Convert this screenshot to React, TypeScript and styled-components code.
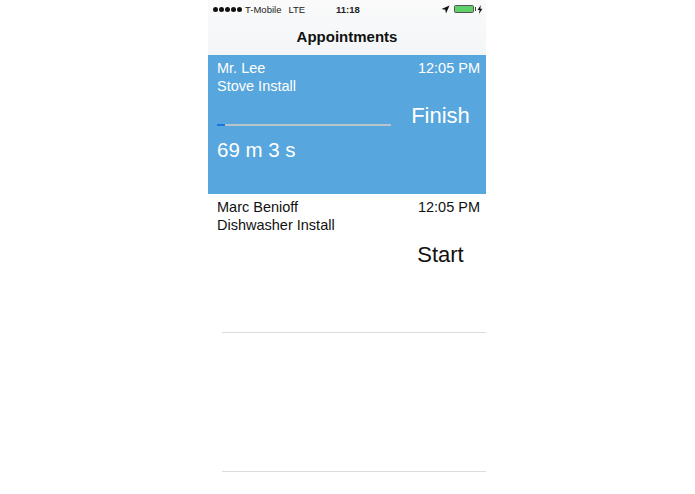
import React from "react";
import styled, { createGlobalStyle } from "styled-components";

const Global = createGlobalStyle`
  html, body { margin: 0; padding: 0; background: #fff; }
  body { font-family: "Liberation Sans", Arial, sans-serif; }
`;

const Page = styled.div`
  width: 695px;
  height: 494px;
  display: flex;
  justify-content: flex-start;
  overflow: hidden;
`;

const Phone = styled.div`
  width: 278px;
  margin-left: 208px;
  display: flex;
  flex-direction: column;
`;

const Header = styled.div`
  height: 55px;
  background: linear-gradient(#fafafa, #f3f6f8);
  display: flex;
  flex-direction: column;
`;

const StatusBar = styled.div`
  height: 18px;
  padding: 0 3px 0 5px;
  display: flex;
  align-items: center;
  position: relative;
  font-size: 9.5px;
  color: #222;
`;

const Dots = styled.div`
  display: flex;
  gap: 1px;
  margin-right: 3px;
`;

const Dot = styled.span`
  width: 5px;
  height: 5px;
  border-radius: 50%;
  background: #111;
`;

const Lte = styled.span`
  margin-left: 7px;
`;

const Clock = styled.span`
  position: absolute;
  left: 128px;
  font-weight: 700;
  font-size: 9.5px;
`;

const StatusRight = styled.div`
  margin-left: auto;
  display: flex;
  align-items: center;
  gap: 4px;
`;

const Battery = styled.div`
  width: 20px;
  height: 8px;
  background: #5fd068;
  border: 1px solid #555;
  box-sizing: border-box;
  border-radius: 1.5px;
  position: relative;
  &::after {
    content: "";
    position: absolute;
    right: -3px;
    top: 1px;
    width: 1px;
    height: 4px;
    background: #444;
  }
`;

const Title = styled.div`
  flex: 1;
  display: flex;
  align-items: center;
  justify-content: center;
  padding-bottom: 1px;
  font-size: 15px;
  font-weight: 700;
  color: #111;
`;

const Row = styled.div<{ $active?: boolean }>`
  height: 139px;
  flex: none;
  box-sizing: border-box;
  padding: 4px 6px 0 9px;
  position: relative;
  color: ${(p) => (p.$active ? "#fff" : "#111")};
  background: ${(p) => (p.$active ? "#57a6dd" : "transparent")};
`;

const Separator = styled.div`
  height: 1px;
  margin-left: 14px;
  background: #dcdcdc;
  margin-top: -1px;
  position: relative;
`;

const Line = styled.div`
  display: flex;
  justify-content: space-between;
  font-size: 14.5px;
  line-height: 18px;
`;

const Body = styled.div`
  display: flex;
  margin-top: 8px;
`;

const Progress = styled.div`
  width: 174px;
  flex: none;
  display: flex;
  flex-direction: column;
`;

const Track = styled.div`
  height: 2px;
  margin-top: 21px;
  background: #b9c3ca;
  display: flex;
`;

const Fill = styled.div`
  height: 2px;
  background: #1878e0;
`;

const Elapsed = styled.div`
  margin-top: 12px;
  font-size: 20.5px;
  line-height: 24px;
`;

const Action = styled.div`
  flex: 1;
  text-align: center;
  font-size: 22px;
  line-height: 26px;
  padding-left: 10px;
`;

const StartBody = styled(Body)`
  padding-left: 174px;
`;

function App() {
  return (
    <Page>
      <Global />
      <Phone>
        <Header>
          <StatusBar>
            <Dots>
              {[0, 1, 2, 3, 4].map((i) => (
                <Dot key={i} />
              ))}
            </Dots>
            <span>T-Mobile</span>
            <Lte>LTE</Lte>
            <Clock>11:18</Clock>
            <StatusRight>
              <svg width="9" height="9" viewBox="0 0 9 9">
                <path d="M8.5 .5 L0.5 4 L4.3 4.7 L5 8.5 Z" fill="#111" />
              </svg>
              <Battery />
              <svg width="6" height="9" viewBox="0 0 6 9" style={{ marginLeft: -1 }}>
                <path d="M3.8 0 L0.6 5 H2.6 L2 9 L5.4 3.8 H3.3 Z" fill="#111" />
              </svg>
            </StatusRight>
          </StatusBar>
          <Title>Appointments</Title>
        </Header>
        <Row $active>
          <Line>
            <span>Mr. Lee</span>
            <span>12:05 PM</span>
          </Line>
          <Line>
            <span>Stove Install</span>
          </Line>
          <Body>
            <Progress>
              <Track>
                <Fill style={{ width: `${(8 / 174) * 100}%` }} />
              </Track>
              <Elapsed>69 m 3 s</Elapsed>
            </Progress>
            <Action>Finish</Action>
          </Body>
        </Row>
        <Row>
          <Line>
            <span>Marc Benioff</span>
            <span>12:05 PM</span>
          </Line>
          <Line>
            <span>Dishwasher Install</span>
          </Line>
          <StartBody>
            <Action>Start</Action>
          </StartBody>
        </Row>
        <Separator />
        <Row />
        <Separator />
      </Phone>
    </Page>
  );
}

export default App;
